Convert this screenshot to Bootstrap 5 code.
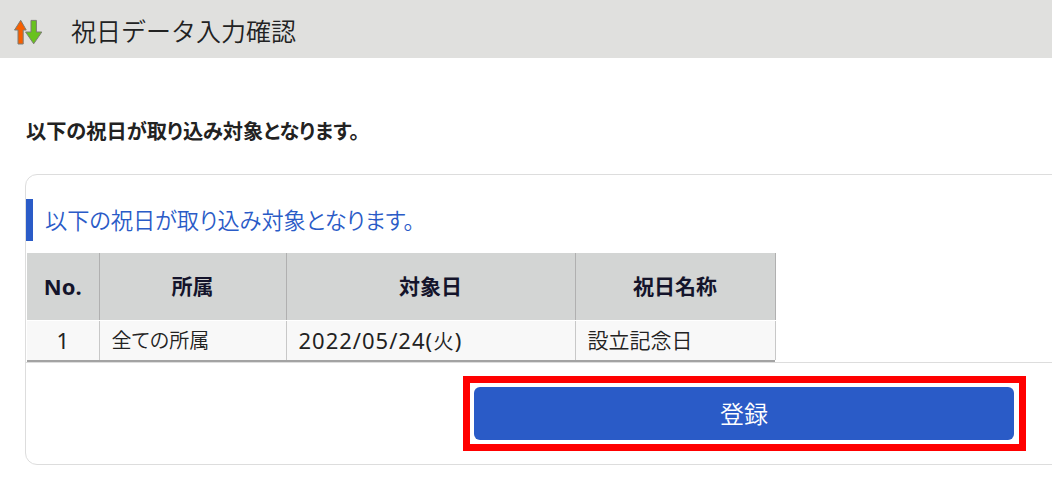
<!DOCTYPE html>
<html lang="ja">
<head>
<meta charset="utf-8">
<title>祝日データ入力確認</title>
<link href="https://cdn.jsdelivr.net/npm/bootstrap@5.3.0/dist/css/bootstrap.min.css" rel="stylesheet">
<style>
html, body { height: 100%; overflow: hidden; }
body { font-family: "Noto Sans", "Noto Sans CJK JP", sans-serif; background: #fff; color: #222; }
.pg-head { height: 58px; background: #e0e0de; padding-left: 14px; gap: 29px; }
.pg-head svg { width: 28px; height: 24px; margin-top: 6px; overflow: visible; }
.pg-title { font-size: 25px; font-weight: 350; color: #222; margin: 4px 0 0; line-height: 1; }
.pg-lead { font-size: 20.2px; font-feature-settings: "palt"; font-weight: 700; margin: 61px 0 0 26px; line-height: 24px; color: #222; }
.pg-panel { margin: 31px -30px 0 25px; height: 291px; border: 1px solid #ddd; border-radius: 12px; padding-top: 24px; }
.pg-sub { border-left: 7px solid #2a5bc7; height: 42px; padding-left: 12px; font-size: 22.2px; font-feature-settings: "palt"; font-weight: 350; color: #2a5bc7; margin: 0; line-height: 44px; }
.pg-table-wrap { margin: 12px 0 0 1px; width: 748px; border-bottom: 2px solid #a3a3a3; }
.pg-table { width: 748px; table-layout: fixed; margin: 0; border-collapse: collapse; font-size: 20.5px; }
.pg-table th { height: 67px; background: #d3d5d4; color: #14142b; font-size: 21px; font-weight: 700; text-align: center; vertical-align: middle; padding: 0; border: 0; border-right: 1px solid #b0b0b0; border-bottom: 1px solid #fff; }
.pg-table td { height: 40px; background: #f8f8f8; color: #222; padding: 0 12px; vertical-align: middle; border: 0; border-right: 1px solid #c8c8c8; font-weight: 350; font-feature-settings: "palt"; white-space: nowrap; }
.pg-table td:first-child { text-align: center; font-size: 22px; font-weight: 400; }
.pg-table th.pg-no { font-size: 22px; }
.pg-table td.pg-dept { font-size: 20px; padding-top: 2px; }
.pg-table td.pg-name { font-size: 21px; }
.pg-table td.pg-date { font-size: 22px; font-weight: 400; letter-spacing: 1px; }
.pg-date span { font-size: 20.5px; font-weight: 350; }
.pg-foot { border-top: 1px solid #ddd; height: 102px; padding: 13px 55px 0 0; }
.pg-frame { width: 563px; height: 75px; border: 7px solid #f00; padding: 4px; margin-left: auto; }
.pg-frame .btn { display: block; width: 540px; height: 53px; margin: 0; background: #2a5bc7; border: 0; border-radius: 6px; color: #fff; font-size: 24px; font-weight: 350; padding: 0; }
</style>
</head>
<body>
<header class="pg-head d-flex align-items-center">
  <svg viewBox="0 0 28 24" aria-hidden="true">
    <path d="M4 24 V10 H.5 L6.7 .3 L12.2 10 H9.2 V24 Z" fill="#f75f00" stroke="#7d7d74" stroke-width="1"/>
    <path d="M17 .4 H22.4 V12 H27.8 L19.7 23.8 L11.6 12 H17 Z" fill="#69c21e" stroke="#7d7d74" stroke-width="1"/>
  </svg>
  <h1 class="pg-title">祝日データ入力確認</h1>
</header>
<p class="pg-lead">以下の祝日が取り込み対象となります。</p>
<section class="pg-panel">
  <h2 class="pg-sub">以下の祝日が取り込み対象となります。</h2>
  <div class="pg-table-wrap">
    <table class="table pg-table">
      <colgroup><col style="width:72px"><col style="width:187px"><col style="width:289px"><col style="width:200px"></colgroup>
      <thead><tr><th class="pg-no">No.</th><th>所属</th><th>対象日</th><th>祝日名称</th></tr></thead>
      <tbody><tr><td>1</td><td class="pg-dept">全ての所属</td><td class="pg-date">2022/05/24(<span>火</span>)</td><td class="pg-name">設立記念日</td></tr></tbody>
    </table>
  </div>
  <div class="pg-foot">
    <div class="pg-frame"><button type="button" class="btn">登録</button></div>
  </div>
</section>
<script src="https://cdn.jsdelivr.net/npm/bootstrap@5.3.0/dist/js/bootstrap.bundle.min.js"></script>
</body>
</html>
